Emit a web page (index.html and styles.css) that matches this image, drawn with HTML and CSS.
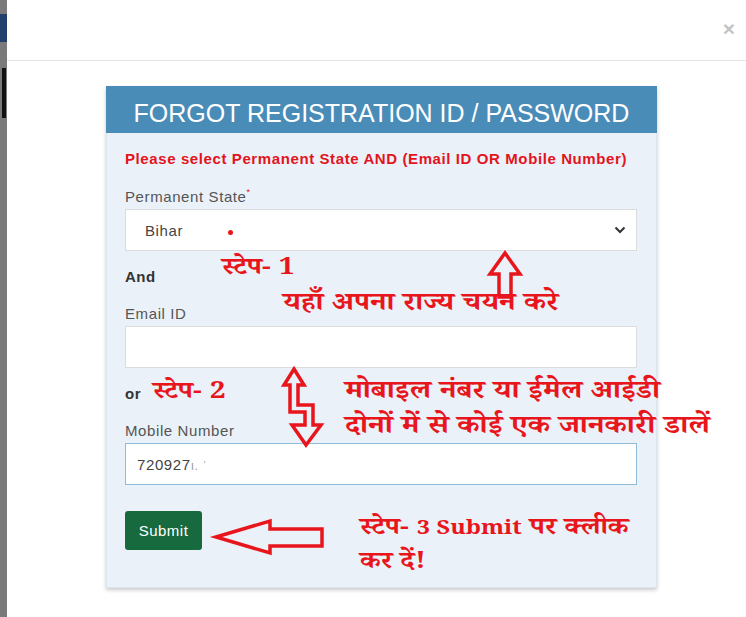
FILE: index.html
```html
<!DOCTYPE html>
<html lang="hi">
<head>
<meta charset="utf-8">
<title>Forgot Registration ID / Password</title>
<link rel="stylesheet" href="styles.css">
</head>
<body>
<div class="page">
  <div class="backdrop">
    <div class="bd-blue"></div>
    <div class="bd-black"></div>
  </div>
  <div class="modal">
    <div class="modal-header">
      <span class="close">×</span>
    </div>
    <div class="modal-body">
      <div class="card">
        <div class="card-header">FORGOT REGISTRATION ID / PASSWORD</div>
        <div class="card-body">
          <p class="warning">Please select Permanent State AND (Email ID OR Mobile Number)</p>
          <label class="label label-first">Permanent State<sup class="req">*</sup></label>
          <div class="field select">
            <span class="value">Bihar</span>
            <svg class="chev" width="12" height="8" viewBox="0 0 12 8"><path d="M1.5 1.5 L6 6 L10.5 1.5" fill="none" stroke="#333" stroke-width="2"/></svg>
          </div>
          <div class="joiner">And</div>
          <label class="label">Email ID</label>
          <div class="field"></div>
          <div class="joiner">or</div>
          <label class="label">Mobile Number</label>
          <div class="field focus"><span class="value">720927<span class="blur">ı.    ˈ</span></span></div>
          <button class="submit">Submit</button>
        </div>
      </div>
    </div>
  </div>

  <div class="notes">
    <span class="dot"></span>
    <div class="note n1">स्टेप- 1</div>
    <div class="note n2">यहाँ अपना राज्य चयन करे</div>
    <div class="note n3">स्टेप- 2</div>
    <div class="note n4">मोबाइल नंबर या ईमेल आईडी<br>दोनों में से कोई एक जानकारी डालें</div>
    <div class="note n6">स्टेप- <span class="lat">3 Submit</span> पर क्लीक<br>कर दें!</div>
    <svg class="arrows" width="746" height="617" viewBox="0 0 746 617">
      <g fill="none" stroke="#e8161c" stroke-width="3.5" stroke-linejoin="miter">
        <polygon points="505,253 520,274 511,274 511,297 499,297 499,274 490,274"/>
        <polygon points="294,369 304,385 298,385 298,405 313,405 313,425 321,425 306,445 292,425 305,425 305,412 290,412 290,385 284,385"/>
        <polygon points="216,537 270,521 270,529 322,529 322,546 270,546 270,553"/>
      </g>
    </svg>
  </div>
</div>
</body>
</html>
```
FILE: styles.css
```css
html, body {
  margin: 0;
  padding: 0;
  background: #ffffff;
}
body {
  font-family: "Liberation Sans", Arial, sans-serif;
  color: #333;
}
.page {
  position: relative;
  display: flex;
  width: 746px;
  height: 617px;
  overflow: hidden;
}
.backdrop {
  width: 7px;
  flex: none;
  background: #7a7a7a;
  display: flex;
  flex-direction: column;
}
.bd-blue {
  margin-top: 14px;
  height: 28px;
  background: #22406e;
}
.bd-black {
  margin-top: 26px;
  margin-left: 2px;
  width: 4px;
  height: 50px;
  background: #111;
}
.modal {
  flex: 1;
  background: #fff;
  display: flex;
  flex-direction: column;
}
.modal-header {
  height: 60px;
  border-bottom: 1px solid #e5e5e5;
  display: flex;
  justify-content: flex-end;
  align-items: center;
  padding-right: 11px;
}
.close {
  font-size: 21px;
  font-weight: bold;
  color: #c4c4c4;
  line-height: 1;
  margin-top: -4px;
}
.modal-body {
  padding: 25px 0 0 99px;
}
.card {
  width: 551px;
  background: #eaf1f8;
  box-shadow: 0 2px 4px rgba(0,0,0,0.22);
  border: 1px solid #dde5ee;
  box-sizing: border-box;
}
.card-header {
  height: 47px;
  background: #4a8cb8;
  color: #fff;
  font-size: 25px;
  line-height: 54px;
  text-align: center;
  margin: -1px -1px 0;
}
.card-body {
  padding: 17px 19px 37px 18px;
  display: flex;
  flex-direction: column;
  align-items: flex-start;
}
.warning {
  margin: 0;
  color: #e3141c;
  font-size: 15px;
  letter-spacing: 0.6px;
  font-weight: bold;
  line-height: 18px;
  white-space: nowrap;
}
.label {
  display: block;
  font-size: 15px;
  letter-spacing: 0.6px;
  line-height: 18px;
  color: #555;
  margin-top: 19px;
}
.label-first { margin-top: 20px; }
.req {
  color: #e3141c;
  font-size: 9px;
  vertical-align: 7px;
  line-height: 0;
}
.field {
  margin-top: 3px;
  width: 512px;
  height: 42px;
  box-sizing: border-box;
  background: #fff;
  border: 1px solid #dcdcdc;
  display: flex;
  align-items: center;
  padding: 0 10px 0 19px;
}
.field.focus {
  border-color: #8fbcd6;
  padding-left: 11px;
}
.select { justify-content: space-between; }
.value {
  font-size: 15px;
  letter-spacing: 0.6px;
  color: #444;
}
.blur { color: #999; font-size: 12px; }
.joiner {
  font-size: 15px;
  letter-spacing: 0.5px;
  line-height: 18px;
  font-weight: bold;
  color: #333;
  margin-top: 17px;
}
.submit {
  margin-top: 26px;
  width: 77px;
  height: 39px;
  background: #176a3d;
  color: #fff;
  border: none;
  border-radius: 3px;
  font-family: "Liberation Sans", Arial, sans-serif;
  font-size: 15px;
  letter-spacing: 0.5px;
  padding: 0;
}

/* annotation layer drawn over the screenshot */
.notes {
  position: absolute;
  inset: 0;
  pointer-events: none;
}
.arrows {
  position: absolute;
  left: 0;
  top: 0;
}
.dot {
  position: absolute;
  left: 228px;
  top: 230px;
  width: 5px;
  height: 5px;
  border-radius: 50%;
  background: #e8161c;
}
.note {
  position: absolute;
  color: #e8161c;
  font-family: "Noto Serif Devanagari", "Liberation Serif", serif;
  font-weight: bold;
  line-height: 1;
  white-space: nowrap;
  transform: scaleX(1.17);
  transform-origin: left top;
}
.lat { font-size: 20px; }
.n1 { left: 222px; top: 259px; font-size: 24px; }
.n2 { left: 283px; top: 294px; font-size: 25.5px; }
.n3 { left: 153px; top: 383px; font-size: 24px; }
.n4 { left: 345px; top: 377px; font-size: 25.8px; line-height: 35px; }
.n6 { left: 360px; top: 514px; font-size: 24px; line-height: 33px; }
```
